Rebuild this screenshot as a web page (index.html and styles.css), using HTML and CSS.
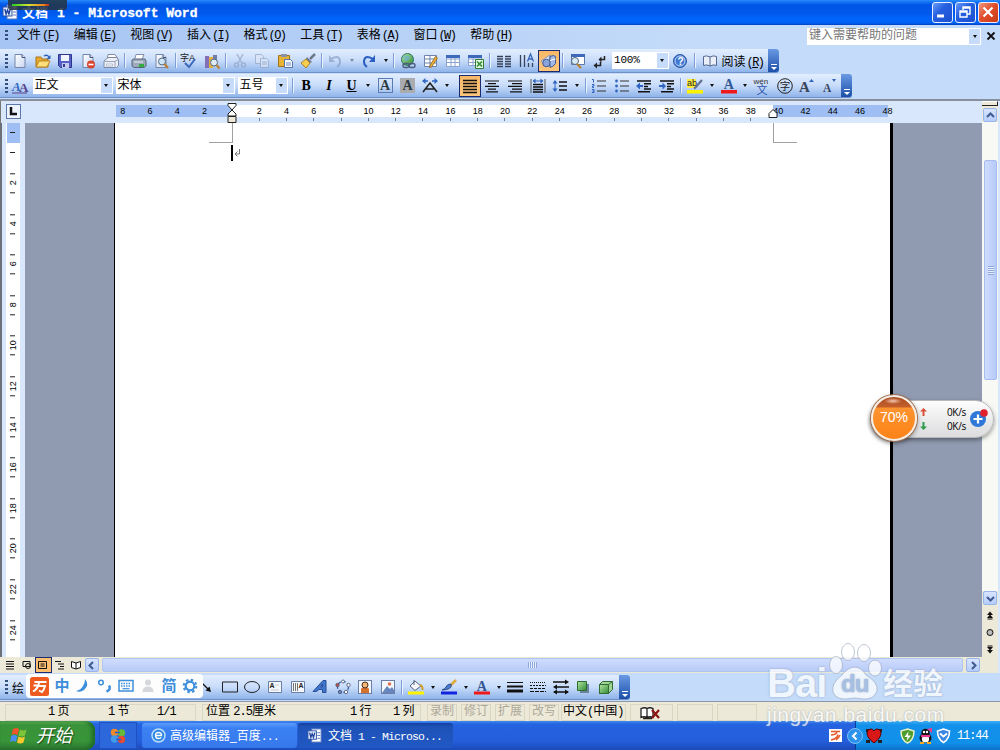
FILE: index.html
```html
<!DOCTYPE html>
<html lang="zh-CN">

<head>
    <meta charset="UTF-8">
    <title>文档 1 - Microsoft Word</title>
    <link rel="stylesheet" href="styles.css">
</head>

<body>

    <svg class="defs" width="0" height="0">
        <defs>
            <linearGradient id="gGreen" x1="0" y1="0" x2="1" y2="1"><stop offset="0" stop-color="#b4e6a4"/><stop offset="1" stop-color="#2f8a34"/></linearGradient>
            <linearGradient id="gPaper" x1="0" y1="0" x2="1" y2="1"><stop offset="0" stop-color="#fff"/><stop offset="1" stop-color="#c9d6ee"/></linearGradient>
        </defs>
        <symbol id="i-lines" viewBox="0 0 16 16"><path d="M1 2.500h14M1 5.500h14M1 8.500h14M1 11.500h14M1 14.500h14" stroke="#111" stroke-width="1.300"/></symbol>
        <symbol id="i-page" viewBox="0 0 16 16"><path d="M3 1.500h7l3 3v10H3z" fill="url(#gPaper)" stroke="#7486ab"/><path d="M10 1.500v3h3" fill="#dbe5f7" stroke="#44547c"/></symbol>
        <symbol id="i-pic" viewBox="0 0 16 16"><rect x="1.500" y="1.500" width="13" height="13" fill="#f4f7fc" stroke="#6b7ea5"/></symbol>
        <symbol id="i-word" viewBox="0 0 16 16"><rect x="5" y="1" width="10" height="14" fill="#fff" stroke="#5878c0"/><path d="M11 5h3M11 8h3M11 11h3" stroke="#5878c0"/><rect x="1" y="3" width="9" height="9" fill="#e9effc" stroke="#2c52a8"/><path d="M2.800 5l1.300 5 1.400-4 1.400 4L8.300 5" fill="none" stroke="#1d439c" stroke-width="1.400"/></symbol>
    </svg>

    <div class="window">
        <!-- 标题栏 -->
        <div class="titlebar">
            <svg class="app-icon" width="16" height="16"><use href="#i-word"/></svg>
            <span class="title">文档<b>1 - Microsoft Word</b></span>
            <div class="win-btns">
                <span class="wb"><svg width="18" height="18"><path d="M4 13h7" stroke="#fff" stroke-width="3"/></svg></span>
                <span class="wb"><svg width="18" height="18" fill="none" stroke="#fff" stroke-width="1.400"><path d="M7 7V4h7v7h-3M7 5h7"/><path d="M4 8h7v6H4zM4 9h7"/></svg></span>
                <span class="wb close"><svg width="18" height="18"><path d="M4.500 4.500l9 9M13.500 4.500l-9 9" stroke="#fff" stroke-width="2.200"/></svg></span>
            </div>
            <div class="gadget"><i></i></div>
        </div>

        <!-- 菜单栏 -->
        <div class="menubar">
            <i class="grip"></i>
            <span class="menu">文件<b>(<u>F</u>)</b></span>
            <span class="menu">编辑<b>(<u>E</u>)</b></span>
            <span class="menu">视图<b>(<u>V</u>)</b></span>
            <span class="menu">插入<b>(<u>I</u>)</b></span>
            <span class="menu">格式<b>(<u>O</u>)</b></span>
            <span class="menu">工具<b>(<u>T</u>)</b></span>
            <span class="menu">表格<b>(<u>A</u>)</b></span>
            <span class="menu">窗口<b>(<u>W</u>)</b></span>
            <span class="menu">帮助<b>(<u>H</u>)</b></span>
            <div class="ask">键入需要帮助的问题<i class="drop"></i></div>
            <svg class="doc-close" width="10" height="10"><path d="M1.500 1.500l7 7M8.500 1.500l-7 7" stroke="#111" stroke-width="1.800"/></svg>
        </div>

        <!-- 常用工具栏 -->
        <div class="bar-row">
            <div class="bar">
                <i class="grip"></i>
                <span class="ic"><svg><use href="#i-page"/></svg></span>
                <span class="ic"><svg><path d="M1 4h5l1 2h6v8H1z" fill="#e9a92c" stroke="#a9741a"/><path d="M1 14l3-6h11l-3 6z" fill="#ffdf7c" stroke="#b98421"/><path d="M9 3q3-2 5 1" fill="none" stroke="#2e62b8" stroke-width="1.300"/><path d="M15.500 2v4h-4z" fill="#2e62b8"/></svg></span>
                <span class="ic"><svg><path d="M1.500 1.500h13v13h-11l-2-2z" fill="#5460c4" stroke="#30358c"/><path d="M4 2h8v6H4z" fill="#f2f4fc"/><path d="M5 10h7v5H5z" fill="#c4caec"/><path d="M6 11h2v3H6z" fill="#333a92"/></svg></span>
                <span class="ic"><svg><use href="#i-page"/><circle cx="11" cy="11.500" r="4" fill="#d8442c"/><path d="M8.500 11.500h5" stroke="#fff" stroke-width="1.600"/></svg></span>
                <span class="ic"><svg><path d="M5 1.500h7l2 3v3H4z" fill="#fff" stroke="#808ca6"/><path d="M1 8l4-3.500h9l1.500 2.500v5.500l-2 2H1z" fill="#eceff6" stroke="#7d88a2"/><path d="M1.500 8.500h10.500v6M12 8.500l3-2" fill="none" stroke="#99a2b8"/><path d="M3.500 11h6v2h-6z" fill="#fff" stroke="#b5bccd"/></svg></span>
                <i class="sep"></i>
                <span class="ic"><svg><path d="M5 1.500h8l-2 5H3.500z" fill="#fff" stroke="#8290a8"/><path d="M1 7l2-1h11l1 2v5l-2 1.500H3L1 13z" fill="#9da9ba" stroke="#596578"/><path d="M3 9h9" stroke="#e8eef5"/><path d="M8 11h5v3H8z" fill="#2fac3c"/></svg></span>
                <span class="ic"><svg><use href="#i-page"/><circle cx="9" cy="8.500" r="3.500" fill="#cbe4f6" stroke="#56677e"/><path d="M11.500 11l3.500 4" stroke="#bc812e" stroke-width="2.200"/></svg></span>
                <i class="sep"></i>
                <span class="ic"><svg><text x="-1" y="8" font-size="9" fill="#222">字A</text><path d="M4 10l4 4 6-8" fill="none" stroke="#3c68bc" stroke-width="2"/></svg></span>
                <span class="ic"><svg><path d="M1 3h4v12H1z" fill="#8470b8"/><path d="M5 4h4v11H5z" fill="#e0b23b"/><path d="M9 2h4v8H9z" fill="#6f7fa8"/><circle cx="10" cy="9.500" r="3.500" fill="#dcebf7" stroke="#56677e"/><path d="M12.500 12l3 3.500" stroke="#bc812e" stroke-width="2"/></svg></span>
                <i class="sep"></i>
                <span class="ic off"><svg fill="none" stroke="#93a4c2" stroke-width="1.400"><path d="M5 1l5 9M11 1L6 10"/><circle cx="4.500" cy="12" r="2"/><circle cx="11.500" cy="12" r="2"/></svg></span>
                <span class="ic off"><svg fill="#dce5f4" stroke="#93a4c2"><path d="M1.500 1.500h6l2 2v7h-8z"/><path d="M6.500 5.500h6l2 2v7h-8zM8 9h5M8 11h5"/></svg></span>
                <span class="ic"><svg><path d="M1.500 2.500h11v11h-11z" fill="#e8b235" stroke="#a0731c"/><path d="M4 1h6v3H4z" fill="#8a91a2"/><path d="M7.500 6.500h6l2 2v6h-8z" fill="#f4f7fd" stroke="#5873a8"/><path d="M9 10h5M9 12h5" stroke="#6f8bc0"/></svg></span>
                <span class="ic"><svg><path d="M15 1l-5 5" stroke="#70798a" stroke-width="2.500"/><path d="M7 4l5 5-2 1-4-4z" fill="#707a96"/><path d="M6 6l4 4-4 5-5-5z" fill="#f6cf50" stroke="#ae8224"/></svg></span>
                <i class="sep"></i>
                <span class="ic off"><svg><path d="M3 6q9-5 9 3 0 3-3 5" fill="none" stroke="#8ba0c8" stroke-width="2"/><path d="M1 2v7h6z" fill="#8ba0c8"/></svg></span>
                <i class="arr off"></i>
                <span class="ic"><svg><path d="M12 6q-9-5-9 3 0 3 3 5" fill="none" stroke="#2b5fc2" stroke-width="2"/><path d="M14 2v7H8z" fill="#2b5fc2"/></svg></span>
                <i class="arr"></i>
                <i class="sep"></i>
                <span class="ic"><svg><circle cx="7.500" cy="6.500" r="6" fill="url(#gGreen)" stroke="#2a7360"/><path d="M3 4q4-3 7 0-1 4-5 4z" fill="#6bb3e4" opacity=".6"/><g fill="none" stroke="#4e5d7c" stroke-width="1.400"><rect x="3" y="10.500" width="6" height="4" rx="2"/><rect x="9" y="10.500" width="6" height="4" rx="2"/></g></svg></span>
                <span class="ic"><svg><path d="M1.500 2.500h12v11h-12zM1.500 6h12M1.500 10h12M7 2.500v11" fill="#fff" stroke="#6f83ac"/><path d="M14.500 5l-6 9-2 .5.500-2 5.500-9z" fill="#efb43a" stroke="#8a5e1a" stroke-width=".8"/></svg></span>
                <span class="ic"><svg><path d="M1.500 2.500h13v11h-13zM1.500 6h13M1.500 9.500h13M6 2.500v11M10 2.500v11" fill="#fff" stroke="#8aa2d2"/><path d="M1 2h14v3H1z" fill="#3e68ba"/></svg></span>
                <span class="ic"><svg><path d="M.5 2.500h13v10H.5zM.5 6h13M.5 9.500h13M5 2.500v10" fill="#fff" stroke="#8aa2d2"/><path d="M0 2h14v3H0z" fill="#3e68ba"/><path d="M7.500 6.500h8v9h-8z" fill="#e6f5e4" stroke="#2f7d34"/><path d="M9 8.500l5 5M14 8.500l-5 5" stroke="#2f8d34" stroke-width="1.700"/></svg></span>
                <i class="sep"></i>
                <span class="ic"><svg><path d="M1 3.500h6M9 3.500h6M1 6h6M9 6h6M1 8.500h6M9 8.500h6M1 11h6M9 11h6M1 13.500h6M9 13.500h6" stroke="#37435c" stroke-width="1.500"/></svg></span>
                <span class="ic"><svg><path d="M1.500 2v12M5.500 2v12M9.500 10v4M13.500 10v4" stroke="#37435c" stroke-width="1.300"/><path d="M8.500 8.500L11.500 1l3 7.500M9.500 6h4" fill="none" stroke="#3464b8" stroke-width="1.300"/></svg></span>
                <span class="ic on"><svg><path d="M0 8l9-6-1 4 3 2-5 6z" fill="#e8eefa" stroke="#7385ae" stroke-width=".8"/><circle cx="5.500" cy="10" r="3.800" fill="#88a4dc" stroke="#415b94"/><path d="M9 3.500q4-2 5.500 0v7q-2 3-5.500 4z" fill="#a4b9e6" stroke="#415b94"/><path d="M9 7.500q3-1 5.500-1.500" fill="none" stroke="#fff"/></svg></span>
                <i class="sep"></i>
                <span class="ic"><svg><path d="M2.500 1.500h13v10h-13z" fill="#fff" stroke="#5e78ac"/><path d="M2 1h14v3H2z" fill="#3e68ba"/><circle cx="6" cy="8" r="3.500" fill="#d8ebf8" stroke="#56677e"/><path d="M8 11l4 4" stroke="#bc812e" stroke-width="2.200"/></svg></span>
                <span class="ic"><svg><path d="M12.500 3v3.500H8M8.500 9v3.500H4" fill="none" stroke="#222" stroke-width="1.500"/><path d="M9.500 3.500v6l-3-3zM5 9.500v6l-3.500-3z" fill="#222"/></svg></span>
                <span class="combo zoom">100%<i class="drop"></i></span>
                <span class="ic help"><svg><circle cx="8" cy="8" r="6.500" fill="#3f78d2" stroke="#2a53a0"/><circle cx="8" cy="8" r="5" fill="none" stroke="#bcd5f6"/><text x="5.400" y="12" font-size="10" font-weight="bold" fill="#fff">?</text></svg></span>
                <i class="sep"></i>
                <span class="ic book"><svg><path d="M1.500 3.500q3-1.500 6.500.5 3.500-2 6.500-.5v9q-3-1.500-6.500.5-3.500-2-6.500-.5zM8 4v9" fill="#e9eef8" stroke="#55688f"/></svg></span>
                <span class="read">阅读<b>(<u>R</u>)</b></span>
                <i class="end"></i>
            </div>
        </div>

        <!-- 格式工具栏 -->
        <div class="bar-row">
            <div class="bar">
                <i class="grip"></i>
                <span class="ic"><svg><text x="0" y="13" class="serif" font-size="13" font-style="italic" font-weight="bold" fill="#2f65c0">A</text><text x="7" y="14" class="serif" font-size="13" font-weight="bold" fill="#54438c">A</text><path d="M0 15h15" stroke="#54438c"/></svg></span>
                <span class="combo style">正文<i class="drop"></i></span>
                <span class="combo font">宋体<i class="drop"></i></span>
                <span class="combo size">五号<i class="drop"></i></span>
                <i class="sep"></i>
                <span class="ic fmt"><b>B</b></span>
                <span class="ic fmt"><b><em>I</em></b></span>
                <span class="ic fmt"><b><u>U</u></b></span>
                <i class="arr"></i>
                <span class="ic fmt"><span class="boxed">A</span></span>
                <span class="ic fmt"><span class="shaded">A</span></span>
                <span class="ic"><svg><path d="M1 14L8 5l7 9M4 11h8" fill="none" stroke="#222" stroke-width="1.600"/><path d="M2 3h4M10 3h4" stroke="#2f65c0" stroke-width="1.300"/><path d="M3.500 0v6L0 3zM12.500 0v6L16 3z" fill="#2f65c0"/></svg></span>
                <i class="arr"></i>
                <span class="ic on align"><svg><use href="#i-lines"/></svg></span>
                <span class="ic"><svg><path d="M1 3h14M4 5.700h8M1 8.400h14M4 11.100h8M2 13.800h12" stroke="#111" stroke-width="1.200"/></svg></span>
                <span class="ic"><svg><path d="M1 3h14M5 5.700h10M1 8.400h14M5 11.100h10M3 13.800h12" stroke="#111" stroke-width="1.200"/></svg></span>
                <span class="ic"><svg><path d="M1 1v14M15 1v14" stroke="#555"/><path d="M3 6.500h10M3 9h10M3 11.500h10M3 14h10" stroke="#111" stroke-width="1.300"/><path d="M4 3h8" stroke="#2f65c0"/><path d="M5.500.5v5L2.500 3zM10.500.5v5l3-2.500z" fill="#2f65c0"/></svg></span>
                <span class="ic"><svg><path d="M7 4h8M7 8h8M7 12h8" stroke="#111" stroke-width="1.300"/><path d="M3 3v10" stroke="#2f65c0"/><path d="M.5 5.500h5L3 2zM.5 10.500h5L3 14z" fill="#2f65c0"/></svg></span>
                <i class="arr"></i>
                <i class="sep"></i>
                <span class="ic"><svg><path d="M6 3h9M6 8h9M6 13h9" stroke="#333" stroke-width="1.200"/><path d="M1 1.500h1.500v3M1 6.500h2v1.500H1.500v1.500H3M1 11.500h2v3H1M1.500 13H3" fill="none" stroke="#2f65c0"/></svg></span>
                <span class="ic"><svg><path d="M6 3h9M6 8h9M6 13h9" stroke="#333" stroke-width="1.200"/><circle cx="2.500" cy="3" r="1.400" fill="#2f65c0"/><circle cx="2.500" cy="8" r="1.400" fill="#2f65c0"/><circle cx="2.500" cy="13" r="1.400" fill="#2f65c0"/></svg></span>
                <span class="ic"><svg><path d="M1 3h14M8 5.700h7M8 8.400h4M8 11.100h7M2 13.800h12" stroke="#111" stroke-width="1.500"/><path d="M0 8l4-3.500V7h3v2H4v2.500z" fill="#2f65c0"/></svg></span>
                <span class="ic"><svg><path d="M1 3h14M8 5.700h7M8 8.400h4M8 11.100h7M2 13.800h12" stroke="#111" stroke-width="1.500"/><path d="M7 8L3.500 4.500V7H0v2h3.500v2.500z" fill="#2f65c0"/></svg></span>
                <i class="sep"></i>
                <span class="ic"><svg><path d="M0 1h9v9H0z" fill="#ffee3e"/><text x="0" y="8" font-size="9" fill="#222">ab</text><path d="M15 2L8.500 9.500 7 10.500" fill="none" stroke="#617292" stroke-width="2.200"/><path d="M0 12h16v3.500H0z" fill="#fff200"/></svg></span>
                <i class="arr"></i>
                <span class="ic"><svg><text x="2.800" y="11" class="serif" font-size="14" font-weight="bold" fill="#345793">A</text><path d="M0 12h16v3.500H0z" fill="#f01818"/></svg></span>
                <i class="arr"></i>
                <span class="ic"><svg><text x="-.5" y="5.500" font-size="8" fill="#333">wén</text><text x="2.500" y="15.500" font-size="11" fill="#2f55b0">文</text></svg></span>
                <span class="ic"><svg><circle cx="8" cy="8" r="7.300" fill="none" stroke="#222"/><text x="2.800" y="11.800" font-size="10.500" fill="#222">字</text></svg></span>
                <span class="ic"><svg><text x="0" y="14" class="serif" font-size="15" font-weight="bold" fill="#39465a">A</text><path d="M10 4h5l-2.500-3z" fill="#2f65c0"/></svg></span>
                <span class="ic"><svg><text x="1" y="14" class="serif" font-size="11.500" font-weight="bold" fill="#39465a">A</text><path d="M10 1h4l-2 3z" fill="#2f65c0"/></svg></span>
                <i class="end"></i>
            </div>
        </div>

        <!-- 编辑区 -->
        <div class="work">
            <div class="pane">
                <div class="hruler">
                    <span class="tabsel"><svg width="9" height="9"><path d="M2 0v7h6" fill="none" stroke="#111" stroke-width="2.500"/></svg></span>
                    <div class="hscale">
                        <span>8</span><span>6</span><span>4</span><span>2</span><span></span>
                        <span class="t">2</span><span class="t">4</span><span class="t">6</span><span class="t">8</span><span class="t">10</span><span class="t">12</span><span class="t">14</span><span class="t">16</span><span class="t">18</span><span class="t">20</span><span class="t">22</span><span class="t">24</span><span class="t">26</span><span class="t">28</span><span class="t">30</span><span class="t">32</span><span class="t">34</span><span class="t">36</span><span class="t">38</span>
                        <span>40</span><span>42</span><span>44</span><span>46</span><span>48</span>
                    </div>
                    <svg class="indent" width="10" height="22" fill="#fff" stroke="#222"><path d="M1 1.500h8v2L5 8l4 4v2H1v-2l4-4-4-4.500z"/><path d="M1 14.500h8v6H1z" fill="#ece9d8"/></svg>
                    <svg class="indent right" width="10" height="10" fill="#fff" stroke="#222"><path d="M1 9.500v-4l4-4 4 4v4z"/></svg>
                </div>
                <div class="canvas">
                    <div class="vruler">
                        <i class="top"></i>
                        <span>2</span><span>4</span><span>6</span><span>8</span><span>10</span><span>12</span><span>14</span><span>16</span><span>18</span><span>20</span><span>22</span><span>24</span>
                    </div>
                    <div class="page">
                        <div class="corners"><i class="c-left"></i><i class="c-right"></i></div>
                        <div class="line"><i class="caret"></i><svg width="8" height="9"><path d="M6.500 0v5H2M4.500 2.500L2 5l2.500 2.500" fill="none" stroke="#777"/></svg></div>
                    </div>
                </div>
                <div class="hscroll">
                    <span class="view"><svg width="10" height="10"><path d="M1 1.500h8M1 4h8M1 6.500h8M1 9h8" stroke="#111" stroke-width="1.200"/></svg></span>
                    <span class="view"><svg width="10" height="10" fill="none" stroke="#111"><path d="M1 1.500h7v5H1z"/><circle cx="6" cy="6" r="2.500"/></svg></span>
                    <span class="view sel"><svg width="10" height="10" fill="none" stroke="#111"><path d="M.5 1.500h8v7h-8zM2.500 4h4M2.500 6h4"/></svg></span>
                    <span class="view"><svg width="10" height="10" stroke="#111"><path d="M0 1.500h6M3 4h6M5 6.500h4M3 9h6"/></svg></span>
                    <span class="view"><svg width="10" height="10" fill="#fff" stroke="#111"><path d="M.5 1.500L5 3l4.500-1.500v6L5 9 .5 7.500zM5 3v6"/></svg></span>
                    <span class="sbtn"><svg width="9" height="9"><path d="M6 1L2.500 4.500 6 8" fill="none" stroke="#3f5a90" stroke-width="2"/></svg></span>
                    <span class="hthumb"><i></i></span>
                    <span class="sbtn"><svg width="9" height="9"><path d="M3 1l3.500 3.500L3 8" fill="none" stroke="#3f5a90" stroke-width="2"/></svg></span>
                </div>
            </div>
            <div class="vscroll">
                <i class="split"></i>
                <span class="sbtn"><svg width="9" height="9"><path d="M1 6l3.500-3.500L8 6" fill="none" stroke="#3f5a90" stroke-width="2"/></svg></span>
                <div class="vtrack"><span class="vthumb"><i></i></span></div>
                <span class="sbtn"><svg width="9" height="9"><path d="M1 3l3.500 3.500L8 3" fill="none" stroke="#3f5a90" stroke-width="2"/></svg></span>
                <div class="browse">
                    <svg width="8" height="9"><path d="M1 4l3-3.500L7 4zM1 7l3-3.500L7 7zM1.500 7.500h5v1h-5z" fill="#111"/></svg>
                    <svg width="8" height="9"><circle cx="4" cy="4.500" r="3" fill="#bbb" stroke="#111"/></svg>
                    <svg width="8" height="9"><path d="M1.500.5h5v1h-5zM1 2l3 3.500L7 2zM1 5l3 3.500L7 5z" fill="#111"/></svg>
                </div>
            </div>
        </div>

        <!-- 绘图工具栏 -->
        <div class="bar-row draw">
            <div class="bar">
                <i class="grip"></i>
                <span class="draw-label">绘</span>
                <span class="ic"><svg><path d="M2 3l8 8" stroke="#111" stroke-width="1.300"/><path d="M12 13L6.500 11.500l4-4z" fill="#111"/></svg></span>
                <span class="ic"><svg><path d="M.5 3h15v10H.5z" fill="none" stroke="#222"/></svg></span>
                <span class="ic"><svg><ellipse cx="8" cy="8" rx="7.500" ry="5.500" fill="none" stroke="#222"/></svg></span>
                <span class="ic"><svg><path d="M1.500 2.500h13v11h-13z" fill="#f4f7fc" stroke="#6b7ea5"/><text x="2.500" y="9" font-size="7" font-weight="bold" fill="#222">A</text><path d="M8 6h4M4 11h8" stroke="#c7ccd8"/></svg></span>
                <span class="ic"><svg><path d="M1.500 2.500h13v11h-13z" fill="#f4f7fc" stroke="#6b7ea5"/><path d="M3.500 4v8M5.500 4v8M7.500 4v8" stroke="#777"/><text x="8.500" y="9" font-size="7" font-weight="bold" fill="#222">A</text></svg></span>
                <span class="ic"><svg><path d="M1 12.500L11 1.500h3v12h-3.500v-3H7l-2.500 2zM8.500 8h2V5z" fill="#4075cc" stroke="#284f96" fill-rule="evenodd"/></svg></span>
                <span class="ic"><svg><circle cx="8" cy="8" r="5.500" fill="none" stroke="#3c64ac" stroke-dasharray="3 2" stroke-width="1.300"/><g fill="#fff" stroke="#415070" stroke-width=".8"><circle cx="8" cy="2.500" r="1.500"/><circle cx="2.500" cy="6" r="1.700" fill="#c8553f"/><circle cx="13.500" cy="6" r="1.700"/><circle cx="5" cy="13" r="1.700" fill="#6a85c0"/><circle cx="11" cy="13" r="1.700"/></g></svg></span>
                <span class="ic"><svg><use href="#i-pic"/><path d="M4 14V9.500l4-1.500 4 1.500V14z" fill="#d4722e"/><circle cx="8" cy="6" r="3" fill="#f2b878" stroke="#4b2e1c"/></svg></span>
                <span class="ic"><svg><use href="#i-pic"/><path d="M2 14l5-7 3 3 2-2 2 3v3z" fill="#6886be"/><circle cx="9.500" cy="5" r="1.800" fill="#e2704a"/></svg></span>
                <i class="sep"></i>
                <span class="ic"><svg><path d="M2 7l5-5 6 5-6 4.500z" fill="#f4f6fa" stroke="#546480"/><path d="M6 6V1" stroke="#546480"/><path d="M12 6q3 1 2.500 5" stroke="#d19c28" stroke-width="2" fill="none"/><path d="M0 12.500h16v3H0z" fill="#fff200"/></svg></span>
                <i class="arr"></i>
                <span class="ic"><svg><path d="M15 1L9 7" stroke="#e0a93c" stroke-width="2.500"/><path d="M10 5q1 4-3 5-3 1-6 1 3-1 4-3 1-3 5-3z" fill="#4d7ccc" stroke="#2e4e8d"/><path d="M0 12.500h16v3H0z" fill="#1224e0"/></svg></span>
                <i class="arr"></i>
                <span class="ic"><svg><text x="2.800" y="12" class="serif" font-size="14" font-weight="bold" fill="#345793">A</text><path d="M0 12.500h16v3H0z" fill="#f01818"/></svg></span>
                <i class="arr"></i>
                <span class="ic"><svg><path d="M0 3.500h16" stroke="#111"/><path d="M0 7.500h16" stroke="#111" stroke-width="2"/><path d="M0 12h16" stroke="#111" stroke-width="3"/></svg></span>
                <span class="ic"><svg stroke="#111"><path d="M0 3.500h16" stroke-dasharray="1 1"/><path d="M0 6.500h16" stroke-dasharray="2 1"/><path d="M0 9.500h16" stroke-dasharray="3 1"/><path d="M0 12.500h16" stroke-dasharray="4 1"/></svg></span>
                <span class="ic"><svg><path d="M0 3h14M2 8h14M1 13h14" stroke="#111" stroke-width="1.300"/><path d="M16 3l-4-2.500v5zM0 8l4-2.500v5zM0 13l4-2.500v5zM16 13l-4-2.500v5z" fill="#111"/></svg></span>
                <span class="ic"><svg><path d="M5 5h9v9H5z" fill="#69839c"/><path d="M2.500 2.500h9v9h-9z" fill="url(#gGreen)" stroke="#2e6c30"/></svg></span>
                <span class="ic"><svg stroke="#2e6c30"><path d="M1.500 5.500l3-3h10v8l-4 4h-9z" fill="#9fd494"/><path d="M1.500 5.500h9v9h-9z" fill="url(#gGreen)"/><path d="M10.500 5.500l4-3"/></svg></span>
                <i class="end"></i>
            </div>

            <!-- 输入法浮动条 -->
            <div class="ime">
                <svg width="19" height="19"><rect width="19" height="19" rx="2.500" fill="#ee5a20"/><path d="M4.500 5h12M9 6q-1 6-6 8.500M8.500 9h6.500q-1 4-3 6l-3-1.500M3.500 8.500h4" fill="none" stroke="#fff" stroke-width="1.900"/></svg>
                <span>中</span>
                <svg width="16" height="16"><path d="M10 1q5 6-1 11-4 3-8 1 5-1 7-5 2-3 2-7z" fill="#3d8edb"/></svg>
                <svg width="16" height="16"><circle cx="4" cy="4.500" r="2.300" fill="none" stroke="#3d8edb" stroke-width="1.500"/><path d="M12 7.500q2.500 4-2.500 6" fill="none" stroke="#3d8edb" stroke-width="2.500"/></svg>
                <svg width="16" height="16"><rect x="1" y="2.500" width="14" height="10.500" fill="none" stroke="#3d8edb" stroke-width="1.500"/><path d="M3 5.500h10M3 8h10" stroke="#3d8edb" stroke-width="1.500" stroke-dasharray="1.500 1"/><path d="M4.500 10.700h7" stroke="#3d8edb" stroke-width="1.200"/></svg>
                <svg width="16" height="16" fill="#d5d7dc"><circle cx="8" cy="4.500" r="3"/><path d="M2.500 14q0-5.500 5.500-5.500t5.500 5.500z"/></svg>
                <span>简</span>
                <svg width="16" height="16" fill="none" stroke="#3d8edb"><circle cx="8" cy="8" r="4.300" stroke-width="2.200"/><circle cx="8" cy="8" r="6.300" stroke-width="2" stroke-dasharray="2.500 2.450"/></svg>
            </div>
        </div>

        <!-- 状态栏 -->
        <div class="status">
            <div class="cell pages"><span><b>1</b> 页</span><span><b>1</b> 节</span><span><b>1/1</b></span></div>
            <div class="cell pos"><span>位置 <b>2.5</b>厘米</span><span><b>1</b> 行</span><span><b>1</b> 列</span></div>
            <div class="cell mode">录制</div>
            <div class="cell mode">修订</div>
            <div class="cell mode">扩展</div>
            <div class="cell mode">改写</div>
            <div class="cell lang">中文<b>(</b>中国<b>)</b></div>
            <div class="cell spell"><svg width="22" height="14"><path d="M1 2.500q4-1.500 6 0 3-1.500 6 0v9q-3-1.500-6 0-3-1.500-6 0zM7 2.500v9M3 12.500h9" fill="#fff" stroke="#222" stroke-width="1.300"/><path d="M12 4l7 8M19 4l-7 8" stroke="#8d1414" stroke-width="2.200"/></svg></div>
            <div class="cell blank"></div>
            <div class="cell blank last"></div>
        </div>

        <!-- 任务栏 -->
        <div class="taskbar">
            <div class="start">
                <svg width="19" height="18"><path d="M3 2q3-2 6 0L7.500 8q-3-2-6 0z" fill="#f0562a"/><path d="M10 2.500q3 2 6.500 0L15 8.500q-3.500 2-6.500 0z" fill="#7cc43a"/><path d="M1.300 9q3-2 6 0L6 15q-3-2-6 0z" fill="#4a8cf0"/><path d="M8.500 9.500q3 2 6.500 0l-1.500 6q-3.500 2-6.500 0z" fill="#fbc82c"/></svg>
                <span>开始</span>
            </div>
            <div class="quick"><svg width="16" height="16"><circle cx="4.500" cy="4.500" r="3.700" fill="#f08b2c"/><circle cx="11.500" cy="5" r="3.700" fill="#65bb38"/><circle cx="4.500" cy="11" r="3.700" fill="#409ae8"/><circle cx="11.500" cy="11.500" r="3.700" fill="#e24c34"/><path d="M5 4.500h5M6 11.500h5" stroke="#2457d0" stroke-width="1.500"/></svg></div>
            <div class="task">
                <svg width="15" height="15"><circle cx="7.500" cy="7.500" r="6.500" fill="#2e86e0" stroke="#b8dcfa" stroke-width="1.500"/><path d="M4.500 7.500h6q0-3-3-3t-3 3 3 3q2 0 2.800-1.200" fill="none" stroke="#fff" stroke-width="1.300"/></svg>
                <span>高级编辑器_百度<b>...</b></span>
            </div>
            <div class="task active">
                <svg width="15" height="15"><use href="#i-word"/></svg>
                <span>文档<b> 1 - Microso...</b></span>
            </div>
            <svg class="tray-wan" width="13" height="13"><rect width="13" height="13" fill="#fff"/><path d="M2 2.500h9M2 6q4 0 6-2.500M2 11q6-1 7-5.500M7 11q3-2 4-5" stroke="#e6582a" stroke-width="1.500" fill="none"/></svg>
            <div class="tray">
                <svg class="tray-arrow" width="16" height="16"><circle cx="8" cy="8" r="7.500" fill="#2c92ec" stroke="#7cc2f8"/><path d="M9.500 4.500L6 8l3.500 3.500" fill="none" stroke="#fff" stroke-width="2"/></svg>
                <svg width="16" height="16"><path d="M0 1h4v3H0zM12 1h4v3h-4zM0 12h4v3H0zM12 12h4v3h-4z" fill="#222"/><path d="M8 15Q1 10 1 5q0-4 4-4 2 0 3 2 1-2 3-2 4 0 4 4 0 5-7 10z" fill="#d81818" stroke="#500"/></svg>
                <svg class="gap" width="15" height="16"><path d="M7.500 1l6.500 2q0 9-6.500 12Q1 12 1 3z" fill="#4e9c2c" stroke="#e6f1c8" stroke-width="1.500"/><path d="M8.500 3.500L4.500 9h3l-1 4 4.500-5.500H8z" fill="#fff"/></svg>
                <svg width="15" height="16"><ellipse cx="7.500" cy="10" rx="6" ry="5" fill="#111"/><circle cx="7.500" cy="5" r="4.200" fill="#111"/><ellipse cx="7.500" cy="11" rx="3.600" ry="3.600" fill="#fff"/><circle cx="6" cy="4" r="1.200" fill="#fff"/><circle cx="9" cy="4" r="1.200" fill="#fff"/><path d="M3 8h9" stroke="#ec3a8c" stroke-width="2.200"/><path d="M9 1l5-1v5z" fill="#ec3a8c"/><path d="M2 15h4M9 15h4" stroke="#f4a824" stroke-width="2"/></svg>
                <svg width="15" height="16"><path d="M7.500 1l6 2q0 8-6 11.500Q1.500 11 1.500 3z" fill="#3b87e2" stroke="#fff" stroke-width="1.600"/><path d="M4 5.500l3.500 3 3.500-3" fill="none" stroke="#fff" stroke-width="1.800"/></svg>
                <span class="clock">11:44</span>
            </div>
        </div>

        <!-- 网速悬浮球 -->
        <div class="netball">
            <div class="ball">70%</div>
            <div class="speeds">
                <div><svg width="7" height="8"><path d="M3.500 0L7 3.500H4.500V8h-2V3.500H0z" fill="#d9503a"/></svg><span>0K/s</span></div>
                <div><svg width="7" height="8"><path d="M3.500 8L7 4.500H4.500V0h-2v4.500H0z" fill="#2c9c4c"/></svg><span>0K/s</span></div>
            </div>
            <svg class="plus" width="20" height="20"><circle cx="9" cy="11" r="8" fill="#2f78d8"/><path d="M9 6.500v9M4.500 11h9" stroke="#fff" stroke-width="2.200"/><circle cx="15" cy="5" r="3.800" fill="#e0202c"/></svg>
        </div>

        <!-- 水印 -->
        <div class="mark">
            <div class="mark-top">
                <span class="bai">Bai</span>
                <span class="paw">
                    <svg width="54" height="58"><g fill="#fff" stroke="#aab4c8" stroke-width="1"><ellipse cx="8" cy="23" rx="6.500" ry="8.500"/><ellipse cx="20" cy="10" rx="6.500" ry="8.500"/><ellipse cx="36" cy="11" rx="6.500" ry="8.500"/><ellipse cx="47" cy="26" rx="6.500" ry="8"/><path d="M27 25q6 0 11 8 13 8 11 16-3 9-14 8-8-2-16 0-11 1-14-7-2-9 9-17 6-8 13-8z"/></g></svg>
                    <em>du</em>
                </span>
                <span class="jy">经验</span>
            </div>
            <div class="mark-url">jingyan.baidu.com</div>
        </div>
    </div>

</body>

</html>
```

FILE: styles.css
```css
* {
    box-sizing: border-box;
}

body {
    margin: 0;
    font-family: "Liberation Sans", "Noto Sans CJK SC", sans-serif;
    font-size: 12px;
    color: #000;
}

i {
    font-style: normal;
}

.defs {
    position: absolute;
}

.window {
    position: relative;
    display: flex;
    flex-direction: column;
    width: 1000px;
    height: 750px;
    overflow: hidden;
    background: #c4dbf9;
}

svg {
    display: block;
    flex: none;
}

.serif {
    font-family: "Liberation Serif", serif;
}

/* 标题栏 */
.titlebar {
    position: relative;
    display: flex;
    align-items: center;
    height: 25px;
    padding: 0 1px 0 2px;
    background: linear-gradient(#2a8cf8 0, #1573f4 2px, #0055e5 5px, #0058ea 13px, #0066ff 20px, #0060f4 23px, #0040c0 25px);
}

.app-icon {
    align-self: flex-start;
    margin-top: 4px;
}

.title {
    margin-left: 4px;
    padding-top: 1px;
    color: #fff;
    font-weight: bold;
    font-size: 13px;
    line-height: 24px;
    white-space: pre;
}

.title b {
    margin-left: 9px;
    font: bold 13px "Liberation Mono", monospace;
    -webkit-text-stroke: 0.3px #fff;
}

.win-btns {
    display: flex;
    gap: 2px;
    margin-left: auto;
}

.wb {
    width: 21px;
    height: 21px;
    border: 1px solid #e8f0ff;
    border-radius: 3px;
    background: linear-gradient(135deg, #6a9cf8, #2560e0 40%, #1c50d0);
}

.wb.close {
    background: linear-gradient(135deg, #f09a80, #e0502c 45%, #c83a14);
}

.gadget {
    position: absolute;
    top: -4px;
    left: 8px;
    width: 59px;
    height: 14px;
    padding-top: 8px;
    border-radius: 3px;
    background: rgba(38, 52, 66, 0.85);
}

.gadget i {
    display: block;
    width: 37px;
    height: 2px;
    margin-left: 4px;
    background: linear-gradient(90deg, #22d022, #d8e030 45%, #f08020 85%, #c03010);
}

/* 菜单栏 */
.menubar {
    display: flex;
    align-items: center;
    height: 24px;
    padding: 0 4px 2px 5px;
    background: linear-gradient(90deg, #a6c4f4, #c4dbf9 70%);
}

.grip {
    flex: none;
    width: 3px;
    height: 12px;
    background: repeating-linear-gradient(#33507c 0 2px, transparent 2px 4px);
}

.menu {
    width: 56.65px;
    line-height: 16px;
    margin-top: -3px;
    white-space: nowrap;
}

.menubar .grip {
    margin-right: 9px;
}

.menu b,
.read b {
    font: 12px "Liberation Mono", monospace;
    letter-spacing: -1.600px;
    margin-left: 1px;
}

.ask {
    display: flex;
    justify-content: space-between;
    width: 174px;
    height: 17px;
    margin-left: auto;
    padding: 0 1px 0 2px;
    background: #fff;
    color: #777;
    line-height: 15px;
}

.drop {
    display: flex;
    align-items: center;
    justify-content: center;
    width: 11px;
    height: 15px;
    margin-top: 1px;
    background: #c7dcfb;
}

.drop::before,
.arr::before {
    content: "";
    border: 2.500px solid transparent;
    border-top: 3px solid #111;
    border-bottom: 0;
}

.doc-close {
    margin-left: 5px;
}

/* 工具栏 */
.bar-row {
    position: relative;
    height: 25px;
}

.bar {
    display: flex;
    align-items: center;
    width: max-content;
    height: 24px;
    padding-left: 5px;
    border-bottom: 1px solid #7090c8;
    border-radius: 0 3px 3px 0;
    background: linear-gradient(#e2eefe, #c8dcfa 50%, #8fb4ea);
}

.bar .grip {
    height: 14px;
    margin-right: 1px;
}

.ic {
    display: flex;
    flex: none;
    align-items: center;
    justify-content: center;
    width: 22.600px;
    height: 22px;
}

.ic svg {
    width: 16px;
    height: 16px;
    overflow: visible;
}

.ic.on {
    border: 1px solid #1c2a70;
    background: linear-gradient(#f8b868, #fcc67c);
}

.ic.align {
    margin-left: 6px;
}

.ic.off {
    opacity: 0.7;
}

.ic.book {
    margin-left: 2px;
}

.sep {
    flex: none;
    width: 1px;
    height: 15px;
    margin: 0 2.400px 0 2px;
    background: #7f9fd4;
    box-shadow: 1px 0 0 #eaf3ff;
}

.arr {
    display: flex;
    flex: none;
    justify-content: center;
    width: 11px;
}

.arr.off {
    opacity: 0.4;
}

.combo {
    display: flex;
    flex: none;
    justify-content: space-between;
    height: 17px;
    margin-right: 3px;
    padding: 0 1px 0 2px;
    background: #fff;
    line-height: 16px;
}

.combo.zoom {
    width: 57px;
    margin: 0 0 0 1px;
    font: 11px/16px "Liberation Mono", monospace;
    letter-spacing: -0.200px;
}

.combo.style {
    width: 80px;
    margin-left: 1px;
}

.combo.font {
    width: 119px;
}

.combo.size {
    width: 50px;
    margin-right: 2px;
}

.read {
    width: 46px;
    white-space: nowrap;
}

.end {
    align-self: stretch;
    position: relative;
    width: 11px;
    background: linear-gradient(#6a9ae4, #1c4fa8);
    border-radius: 0 3px 3px 0;
}

.end::before {
    content: "";
    position: absolute;
    left: 3px;
    bottom: 2px;
    border: 3px solid transparent;
    border-top: 3px solid #fff;
    border-bottom: 0;
}

.end::after {
    content: "";
    position: absolute;
    left: 3px;
    bottom: 7px;
    width: 6px;
    height: 1px;
    background: #fff;
}

.fmt {
    font: 14px "Liberation Serif", serif;
}

.boxed,
.shaded {
    width: 15px;
    height: 15px;
    font-weight: bold;
    line-height: 14px;
    text-align: center;
    border: 1px solid #5a7cb0;
    color: #2c3c44;
}

.shaded {
    border-color: #a9abae;
    background: #a9abae;
}

/* 编辑区 */
.work {
    display: flex;
    height: 574px;
    border-top: 2px solid #87909c;
    background: #d8e7fc;
}

.pane {
    display: flex;
    flex-direction: column;
    width: 982px;
}

.hruler {
    position: relative;
    display: flex;
    height: 22px;
    padding: 3px 0 0 5px;
    border-left: 1px solid #777;
}

.tabsel {
    display: flex;
    align-items: center;
    justify-content: center;
    width: 15px;
    height: 15px;
    border: 1px solid #5a78a8;
    background: #eef4fd;
}

.hscale {
    display: flex;
    height: 12px;
    margin: 1px 0 0 95px;
    width: 778px;
    background: linear-gradient(90deg, #9fbff4 116px, #fff 116px, #fff 657px, #9fbff4 657px, #9fbff4 772px, transparent 772px);
    font-size: 9px;
    line-height: 12px;
}

.hscale span {
    position: relative;
    flex: none;
    width: 27.320px;
    text-align: center;
}

.hscale span:first-child {
    margin-left: -7px;
}

.hscale .t::after {
    content: "";
    position: absolute;
    left: 13px;
    top: 13px;
    width: 1px;
    height: 3px;
    background: #6f7f98;
}

.indent {
    position: absolute;
    left: 226px;
    top: 1px;
}

.indent.right {
    left: 767px;
    top: 7px;
}

.canvas {
    display: flex;
    height: 534px;
    background: #909ab0;
}

.vruler {
    display: flex;
    flex-direction: column;
    width: 25px;
    padding-left: 6px;
    border-left: 2px solid #6c7078;
    background: linear-gradient(90deg, #d8e7fc 4px, #fff 4px, #fff 18px, #d8e7fc 18px);
    overflow: hidden;
}

.vruler .top {
    display: flex;
    flex: none;
    width: 13px;
    height: 20px;
    margin: 0 0 20px -1px;
    padding: 9px 0 0 3px;
    background: #9fbff4;
}

.vruler .top::before {
    content: "";
    width: 5px;
    height: 1px;
    background: #222;
    box-shadow: 0 20px 0 #222;
}

.vruler span {
    position: relative;
    display: flex;
    flex: none;
    align-items: center;
    justify-content: center;
    width: 9px;
    height: 20.300px;
    margin: 10px 0 10.300px;
    font-size: 9px;
    writing-mode: vertical-rl;
    transform: rotate(180deg);
}

.vruler span::before,
.vruler span::after {
    content: "";
    position: absolute;
    left: 2px;
    top: 0;
    width: 5px;
    height: 1px;
    background: #222;
}

.vruler span::after {
    top: auto;
    bottom: 0;
}

.page {
    width: 779px;
    margin-left: 89px;
    border-left: 1px solid #000;
    border-right: 3px solid #000;
    background: #fff;
}

.corners {
    display: flex;
    justify-content: space-between;
    width: 588px;
    height: 20px;
    margin-left: 94px;
}

.corners i {
    width: 24px;
    border-bottom: 1px solid #a0a0a0;
}

.c-left {
    border-right: 1px solid #a0a0a0;
}

.c-right {
    border-left: 1px solid #a0a0a0;
}

.line {
    display: flex;
    align-items: center;
    margin: 2px 0 0 116px;
}

.caret {
    width: 2px;
    height: 16px;
    background: #000;
}

.hscroll {
    display: flex;
    align-items: center;
    height: 16px;
    padding-left: 2px;
    background: #ece9d8;
}

.view {
    display: flex;
    align-items: center;
    justify-content: center;
    width: 16.500px;
    height: 16px;
}

.view.sel {
    border: 1px solid #1c2a70;
    background: #fcbf70;
}

.sbtn {
    display: flex;
    flex: none;
    align-items: center;
    justify-content: center;
    width: 14px;
    height: 14px;
    border: 1px solid #98b4ec;
    border-radius: 2px;
    background: linear-gradient(#d8e5ff, #b6ccfa);
}

.hthumb {
    display: flex;
    flex: 1;
    align-items: center;
    justify-content: center;
    height: 14px;
    margin: 0 3px;
    border: 1px solid #b0c4f0;
    border-radius: 2px;
    background: linear-gradient(#cfdcfe, #b8cbf8);
}

.hthumb i {
    width: 9px;
    height: 6px;
    background: repeating-linear-gradient(90deg, #8ea8dc 0 1px, #e8f0ff 1px 2px);
}

.hscroll .sbtn:last-child {
    margin-right: 2px;
}

.vscroll {
    display: flex;
    flex-direction: column;
    align-items: center;
    width: 16px;
    margin-right: 2px;
    background: #ece9d8;
}

.split {
    width: 16px;
    height: 5px;
    margin-bottom: 2px;
    border: 1px solid #222;
    border-top-color: #fff;
    border-left: 0;
    background: #ece9d8;
}

.vtrack {
    width: 16px;
    height: 469px;
    padding: 38px 1px 0 2px;
    background: #f8f8f4;
}

.vthumb {
    display: flex;
    align-items: center;
    justify-content: center;
    width: 13px;
    height: 220px;
    border: 1px solid #a4bcf0;
    border-radius: 2px;
    background: linear-gradient(90deg, #cfdcfe, #b6caf8);
}

.vthumb i {
    width: 6px;
    height: 9px;
    background: repeating-linear-gradient(#8ea8dc 0 1px, #e8f0ff 1px 2px);
}

.browse {
    display: flex;
    flex-direction: column;
    gap: 8px;
    margin-top: 6px;
}

/* 绘图工具栏 */
.draw {
    height: 28px;
    padding-top: 2px;
}

.draw .bar {
    height: 25px;
}

.draw .arr {
    width: 10.500px;
}

.draw .end {
    margin-left: 2px;
}

.draw-label {
    width: 187px;
    padding-left: 3px;
}

.ime {
    position: absolute;
    top: 1px;
    left: 26px;
    display: flex;
    align-items: center;
    justify-content: space-between;
    width: 177px;
    height: 24px;
    padding: 0 5px 0 4px;
    border-radius: 4px;
    background: #fdfdfe;
    color: #3d8edb;
    font-size: 15px;
    font-weight: bold;
    line-height: 22px;
}

/* 状态栏 */
.status {
    display: flex;
    gap: 4px;
    height: 20px;
    padding: 2px 0 0 5px;
    border-top: 1px solid #8c98a8;
    background: #ece9d8;
    line-height: 13px;
}

.status b {
    font: 12px/13px "Liberation Mono", monospace;
    letter-spacing: -1px;
}

.cell {
    flex: none;
    height: 17px;
    border: 1px solid #dad6c4;
    white-space: nowrap;
}

.pages {
    display: flex;
    width: 191px;
    padding-left: 42px;
}

.pages span:first-child {
    width: 60px;
}

.pages span:nth-child(2) {
    width: 49px;
}

.pos {
    display: flex;
    width: 219px;
    margin-left: 2px;
    padding-left: 3px;
}

.pos span:first-child {
    width: 144px;
}

.pos span:nth-child(2) {
    width: 43px;
}

.mode {
    width: 30px;
    color: #aca899;
    padding-left: 2px;
}

.pos + .mode {
    margin-left: 2px;
}

.lang {
    width: 65px;
    margin-left: -2px;
    padding-left: 1px;
}

.spell {
    width: 43px;
    padding: 1px 0 0 9px;
}

.blank {
    width: 36px;
}

.blank.last {
    width: 40px;
}

/* 任务栏 */
.taskbar {
    display: flex;
    align-items: center;
    height: 29px;
    background: linear-gradient(#3f8cf0 0, #2663e0 3px, #245edb 20px, #1c4ab8 29px);
    color: #fff;
}

.start {
    display: flex;
    align-items: center;
    width: 95px;
    height: 29px;
    padding-left: 10px;
    border-radius: 0 9px 9px 0;
    background: linear-gradient(#6bbd63 0, #3a933a 4px, #389538 20px, #2a7430 29px);
    box-shadow: inset -3px 0 4px #1e6a24;
}

.start span {
    margin-left: 7px;
    font-size: 18px;
    font-style: italic;
    line-height: 24px;
    text-shadow: 1px 1px 1px #1c4a1c;
}

.quick {
    display: flex;
    align-items: center;
    justify-content: center;
    width: 38px;
    height: 27px;
    margin: 0 5px 0 4px;
    background: #2c68dc;
    border: 1px solid #1f50c0;
}

.task {
    display: flex;
    align-items: center;
    width: 155px;
    height: 25px;
    margin-right: 1px;
    padding-left: 9px;
    border-radius: 3px;
    background: linear-gradient(#5c9cfa, #3c81f3 5px, #3578ec);
    white-space: pre;
}

.task span {
    margin-left: 4px;
    line-height: 22px;
}

.task b {
    font: 11.500px "Liberation Mono", monospace;
    letter-spacing: -0.900px;
}

.task.active {
    background: linear-gradient(#1640a0, #1e52b7 4px, #2058c4);
}

.task.active span {
    margin-left: 6px;
}

.tray-wan {
    margin-left: auto;
    margin-right: 13px;
}

.tray {
    display: flex;
    align-items: center;
    gap: 3px;
    width: 145px;
    height: 29px;
    border-left: 1px solid #0c3c98;
    background: linear-gradient(#3cb0f8 0, #1290ea 4px, #1190ea 22px, #0c70c8 29px);
}

.tray-arrow {
    margin-left: -9px;
}

.tray .gap {
    margin-left: 15px;
}

.clock {
    margin-left: 3px;
    font: 12px "Liberation Mono", monospace;
    letter-spacing: -1.100px;
}

/* 网速悬浮球 */
.netball {
    position: absolute;
    left: 870px;
    top: 400px;
    display: flex;
    align-items: center;
    width: 124px;
    height: 38px;
    border-radius: 19px;
    background: linear-gradient(#fdfdfd, #dcdcde);
    border: 1px solid #b8b8bc;
    box-shadow: 0 2px 4px rgba(0, 0, 0, 0.4);
}

.ball {
    flex: none;
    width: 46px;
    height: 46px;
    margin-top: -2px;
    border: 2px solid #f6ede4;
    border-radius: 50%;
    background: radial-gradient(ellipse 9px 3px at 20px 4px, #f6c8b0, transparent), linear-gradient(#a84a20, #c4602c 10px, #ff9430 11px, #fb8218);
    box-shadow: 0 0 0 1px #a07050, 0 2px 5px rgba(0, 0, 0, 0.5);
    color: #fff;
    font-size: 14px;
    line-height: 41px;
    text-align: center;
}

.speeds {
    width: 46px;
    margin-left: 3px;
    font-family: "Open Sans", sans-serif;
    font-size: 10px;
    line-height: 14px;
}

.speeds div {
    display: flex;
    align-items: center;
    justify-content: space-between;
    letter-spacing: -0.300px;
}

.plus {
    margin: -3px 0 0 3px;
}

/* 水印 */
.mark {
    position: absolute;
    left: 767px;
    top: 642px;
    width: 180px;
    color: #fff;
    opacity: 0.75;
    text-shadow: 0 0 2px #7c8aa8;
}

.mark-top {
    display: flex;
    align-items: flex-end;
    height: 60px;
}

.bai {
    width: 61px;
    font-size: 40px;
    font-weight: bold;
    line-height: 37px;
    letter-spacing: -1px;
}

.paw {
    position: relative;
    width: 55px;
    height: 60px;
}

.paw em {
    position: absolute;
    left: 13px;
    top: 28px;
    color: #9db6dc;
    font-size: 24px;
    font-style: normal;
    font-weight: bold;
    letter-spacing: -1px;
}

.jy {
    font-size: 30px;
    font-weight: bold;
    line-height: 36px;
}

.mark-url {
    font-size: 21px;
    line-height: 26px;
    letter-spacing: 0.500px;
}
```
